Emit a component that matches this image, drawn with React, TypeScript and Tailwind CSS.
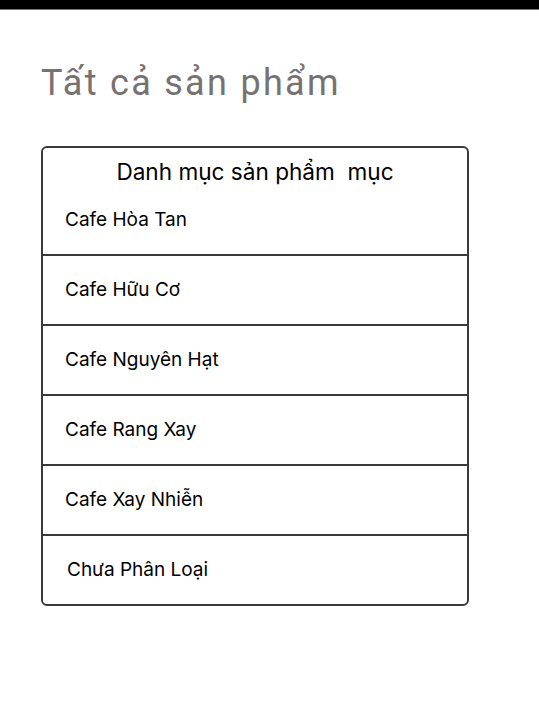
const categories = [
  'Cafe Hòa Tan',
  'Cafe Hữu Cơ',
  'Cafe Nguyên Hạt',
  'Cafe Rang Xay',
  'Cafe Xay Nhi\u1EC5n',
  'Chưa Phân Loại',
];

export default function App() {
  return (
    <div className="min-h-screen bg-white">
      <div className="h-[10px] bg-black border-b border-[#7a7a7a]" />

      <div className="pl-[41px]">
        <h1 className="mt-[52px] text-[36px] leading-[42px] tracking-[2.3px] text-[#787171] font-['Roboto',sans-serif]">
          Tất cả sản phẩm
        </h1>

        <div className="mt-[42px] w-[428px] rounded-[6px] border-2 border-[#3a3a3a] font-['Inter',sans-serif] text-black">
          <div className="pt-[10px] h-[38px] text-center text-[22.6px] leading-[28px] whitespace-pre">
            Danh mục sản phẩm  mục
          </div>
          {categories.map((name, index) => (
            <div
              key={name}
              className={`flex items-center text-[19px] ${
                index < categories.length - 1
                  ? 'h-[70px] pl-[22px] border-b-2 border-[#3a3a3a]'
                  : 'h-[68px] pl-[24px]'
              }`}
            >
              {name}
            </div>
          ))}
        </div>
      </div>
    </div>
  );
}
